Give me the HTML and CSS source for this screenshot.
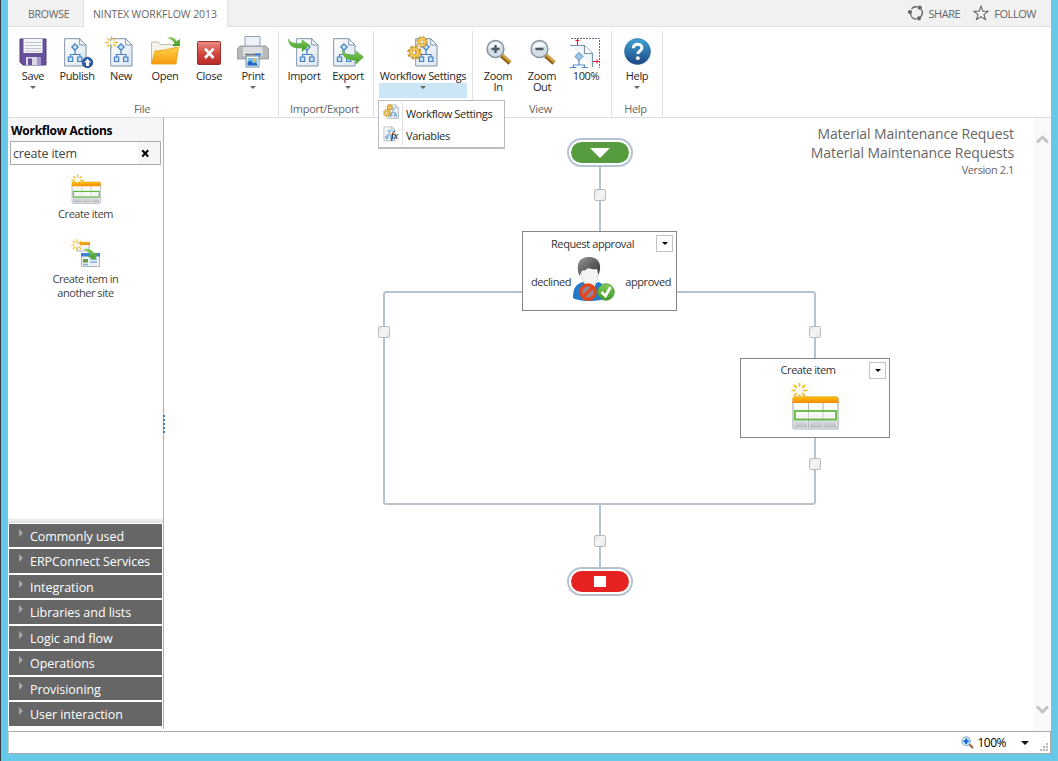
FILE: index.html
```html
<!DOCTYPE html>
<html lang="en">
<head>
<meta charset="utf-8">
<title>Nintex Workflow 2013</title>
<link rel="stylesheet" href="styles.css">
</head>
<body>
<svg class="defs" width="0" height="0" aria-hidden="true">
  <defs>
    <linearGradient id="gGold" x1="0" y1="0" x2="0" y2="1"><stop offset="0" stop-color="#ffd34a"/><stop offset="1" stop-color="#f79a0c"/></linearGradient>
    <linearGradient id="gHead" x1="0" y1="0" x2="0" y2="1"><stop offset="0" stop-color="#ffc000"/><stop offset="1" stop-color="#f58a10"/></linearGradient>
    <linearGradient id="gDoc" x1="0" y1="0" x2="1" y2="1"><stop offset="0" stop-color="#fff"/><stop offset="1" stop-color="#dbe5f0"/></linearGradient>
    <linearGradient id="gRed" x1="0" y1="0" x2="0" y2="1"><stop offset="0" stop-color="#eb8d86"/><stop offset=".5" stop-color="#d24a41"/><stop offset="1" stop-color="#b92a24"/></linearGradient>
    <linearGradient id="gHelp" x1="0" y1="0" x2="0" y2="1"><stop offset="0" stop-color="#3fa5d6"/><stop offset="1" stop-color="#1f4585"/></linearGradient>
    <linearGradient id="gGreen" x1="0" y1="0" x2="0" y2="1"><stop offset="0" stop-color="#83cc5c"/><stop offset="1" stop-color="#3f9a26"/></linearGradient>
    <linearGradient id="gGrey" x1="0" y1="0" x2="0" y2="1"><stop offset="0" stop-color="#fff"/><stop offset=".6" stop-color="#eceef0"/><stop offset="1" stop-color="#b4bac0"/></linearGradient>
    <linearGradient id="gHair" x1="0" y1="0" x2="1" y2="1"><stop offset="0" stop-color="#999"/><stop offset="1" stop-color="#2c2c2c"/></linearGradient>
    <symbol id="doc" viewBox="0 0 23 29" overflow="visible">
      <path d="M.7.7h15l6.300 6.300v21H.7z" fill="url(#gDoc)" stroke="#8094a8"/>
      <path d="M15.700.7V7H22z" fill="#f5f8fb" stroke="#8094a8"/>
      <path d="M11 12v4.500M6.500 19v-2.500h9.500V19" fill="none" stroke="#4580c0" stroke-width="1.200"/>
      <path d="M11 5.800l3.200 3.200-3.200 3.200L7.800 9zM4.400 19h4.300v4.500H4.400zM13.600 19h4.300v4.500h-4.300z" fill="#c8e2f5" stroke="#4580c0" stroke-width="1.200"/>
    </symbol>
    <symbol id="burst" viewBox="-7 -7 14 14" overflow="visible">
      <g stroke="#f6b91f" stroke-width="1.400"><path d="M0-6.700V-3M0 3v3.700M-6.700 0H-3M3 0h3.700M-4.700-4.700l2.500 2.500M2.200 2.200l2.500 2.500M-4.700 4.700l2.500-2.500M2.200-2.200l2.500-2.500"/></g>
      <circle r="2.100" fill="#fffbe4"/>
    </symbol>
    <symbol id="gear" viewBox="-8 -8 16 16" overflow="visible">
      <circle r="6" fill="none" stroke="#b5852a" stroke-width="3.400" stroke-dasharray="2.700 2.010"/>
      <circle r="5.900" fill="none" stroke="#f3bf45" stroke-width="2.200" stroke-dasharray="2.100 2.610" stroke-dashoffset="-.300"/>
      <circle r="3.900" fill="none" stroke="#b5852a" stroke-width="3.900"/>
      <circle r="3.900" fill="none" stroke="#f6ca57" stroke-width="2.800"/>
    </symbol>
    <symbol id="swoosh" viewBox="0 0 22 15" preserveAspectRatio="none" overflow="visible">
      <path d="M.5.600C2 4.500 6 6.200 14 5.200V1.500l7.500 6L14 14.400v-4C5 11.500.5 8 .5.600z" fill="url(#gGreen)" stroke="#58ab3e" stroke-width=".6"/>
    </symbol>
    <symbol id="lens" viewBox="0 0 32 32" overflow="visible">
      <path d="M19 19.500l8.500 7.500" stroke="#8a611c" stroke-width="4.400"/>
      <path d="M19.500 18.500l8.500 7.500" stroke="#d2a03c" stroke-width="2.400"/>
      <circle cx="13" cy="13" r="8.400" fill="#d3dfe6" stroke="#8a959d" stroke-width="1.500"/>
      <path d="M6 12a7 7 0 0 1 13-2c-4 .5-8 1-13 2z" fill="#f5f9fb"/>
      <path d="M9 13h8" stroke="#4d5861" stroke-width="2.400"/>
    </symbol>
    <symbol id="table" viewBox="0 0 48 34" preserveAspectRatio="none" overflow="visible">
      <rect x="1" y="1" width="46" height="32" rx="2" fill="#fff" stroke="#a5acb3" stroke-width="1.200"/>
      <path d="M2.500 7.500h13.300v24.300H2.500zM17.800 7.500h12.900v24.300H17.800zM32.700 7.500h12.800v24.300H32.700z" fill="url(#gGrey)"/>
      <path d="M16.800 7v25.500M31.700 7v25.500" stroke="#b5bbc1" stroke-width="1.200"/>
      <path d="M.5 7V2.500Q.5.500 2.500.500h43q2 0 2 2V7z" fill="url(#gHead)"/>
      <rect x="3" y="15" width="42" height="8.500" fill="#fff" fill-opacity=".3" stroke="#64b840" stroke-width="1.800"/>
    </symbol>
  </defs>
</svg>

<div class="window">
  <header class="tabs">
    <div class="tab">BROWSE</div>
    <div class="tab tab-active">NINTEX WORKFLOW 2013</div>
    <div class="page-actions">
      <span class="action">
        <svg width="16" height="16" viewBox="0 0 16 16" fill="none" stroke="#666" stroke-width="1.400"><path d="M3.500 3.700A6 6 0 0 1 9.500 2M13.400 4.700a6 6 0 0 1-1.400 7.600M8.500 14a6 6 0 0 1-6-5"/><circle cx="11.800" cy="2.700" r="1.400" fill="#666"/><circle cx="2" cy="7" r="1.400" fill="#666"/><circle cx="11" cy="13.300" r="1.400" fill="#666"/></svg>
        <span>SHARE</span>
      </span>
      <span class="action">
        <svg width="16" height="16" viewBox="0 0 16 16"><path d="M8 1.200l1.900 4.900 5.200.2-4.100 3.300 1.500 5L8 11.700l-4.500 2.900 1.500-5L.9 6.300l5.200-.2z" fill="none" stroke="#666" stroke-width="1.100"/></svg>
        <span>FOLLOW</span>
      </span>
    </div>
  </header>

  <nav class="ribbon">
    <section class="group group-file">
      <div class="buttons">
        <div class="btn"><svg class="ico" viewBox="0 0 32 32"><path d="M3 3h26v26H6l-3-3z" fill="#69509b" stroke="#543c84"/><path d="M6.500 3h19v14h-19z" fill="#f5f6f9"/><path d="M8 6.500h16M8 9.500h16M8 12.500h16M8 15.200h16" stroke="#c0c4cd"/><path d="M9 21h15v8H9z" fill="#d9d9e6"/><path d="M11 22.500h4V29h-4z" fill="#69509b"/><path d="M20 21h4v8h-4z" fill="#a596c8"/></svg><span>Save</span><i class="caret"></i></div>
        <div class="btn"><svg class="ico" viewBox="0 0 32 32"><use href="#doc" x="3" y="2" width="23" height="29"/><circle cx="26.500" cy="26.500" r="5.300" fill="#2a5ca6" stroke="#1d4380" stroke-width=".7"/><path d="M26.500 22.800l3.600 3.700h-2v3.500H25v-3.500h-2z" fill="#fff"/></svg><span>Publish</span></div>
        <div class="btn"><svg class="ico" viewBox="0 0 32 32"><use href="#doc" x="5" y="2" width="23" height="29"/><use href="#burst" x="0" y="0" width="13" height="13"/></svg><span>New</span></div>
        <div class="btn"><svg class="ico" viewBox="0 0 32 32"><path d="M2.500 27V6h7l2 2.500H26V27z" fill="#f5f3e9" stroke="#c3bfa8"/><path d="M2.500 28L6 15l10-1 13.500-3-2.500 17z" fill="url(#gGold)" stroke="#e79c18" stroke-width=".8"/><path d="M18 1.500c5-1 8 0 9.500 3.500L31 3v7h-8l2.500-2.500C24 4.500 22 3 18 1.500z" fill="url(#gGreen)"/></svg><span>Open</span></div>
        <div class="btn"><svg class="ico" viewBox="0 0 32 32"><rect x="4.500" y="5.500" width="23" height="23" rx="1" fill="url(#gRed)" stroke="#98312d"/><path d="M12 12.700l8.500 9.300M20.500 12.700L12 22" stroke="#fff" stroke-width="2.700"/></svg><span>Close</span></div>
        <div class="btn"><svg class="ico" viewBox="0 0 32 32"><path d="M8 .5h15V11H8z" fill="#edf3f9" stroke="#8fa3b8"/><path d="M3 10h26l2.500 3v10H.5V13z" fill="#b8babc" stroke="#8b8e92" stroke-width=".8"/><path d="M6 11h19.500v9H6z" fill="#dddfe0"/><path d="M8 18.500h15.500" stroke="#6e7276" stroke-width="1.500"/><path d="M18 18.500h6" stroke="#2a80d9" stroke-width="2"/><path d="M9 20h13v11H9z" fill="#fff" stroke="#6f87a5"/><path d="M10.500 22h10v7.500h-10z" fill="#73c3f1"/><circle cx="18" cy="24" r="1.500" fill="#ffbf2e"/><path d="M10.500 29.500v-3l3-2 3 3 2-1 2 2v1z" fill="#2263ba"/></svg><span>Print</span><i class="caret"></i></div>
      </div>
      <div class="group-name">File</div>
    </section>
    <section class="group group-io">
      <div class="buttons">
        <div class="btn"><svg class="ico" viewBox="0 0 32 32"><use href="#doc" x="8" y="2" width="23" height="29"/><use href="#swoosh" x="0" y="2.500" width="22" height="13.500"/></svg><span>Import</span></div>
        <div class="btn"><svg class="ico" viewBox="0 0 32 32"><use href="#doc" x="1" y="2" width="23" height="29"/><use href="#swoosh" x="10" y="13.500" width="22" height="15"/></svg><span>Export</span><i class="caret"></i></div>
      </div>
      <div class="group-name">Import/Export</div>
    </section>
    <section class="group group-settings">
      <div class="btn btn-wide"><svg class="ico" viewBox="0 0 32 32"><use href="#doc" x="8" y="2" width="23" height="29"/><use href="#gear" x="9" y="0" width="12" height="12"/><use href="#gear" x="0" y="9" width="15" height="15"/></svg><span>Workflow Settings</span><i class="caret"></i></div>
      <div class="menu">
        <div class="menu-item"><span class="menu-icon"><svg width="16" height="16" viewBox="0 0 32 32"><use href="#doc" x="9" y="1" width="23" height="29"/><use href="#gear" x="7" y="0" width="13" height="13"/><use href="#gear" x="0" y="10" width="16" height="16"/></svg></span><span>Workflow Settings</span></div>
        <div class="menu-item"><span class="menu-icon"><svg width="16" height="16" viewBox="0 0 32 32" overflow="visible"><use href="#doc" x="1" y="1" width="24" height="30"/><text class="fx" x="16" y="26">fx</text></svg></span><span>Variables</span></div>
      </div>
    </section>
    <section class="group group-view">
      <div class="buttons">
        <div class="btn"><svg class="ico" viewBox="0 0 32 32"><use href="#lens" x=".5" width="32" height="32"/><path d="M13.500 9v8" stroke="#4d5861" stroke-width="2.400"/></svg><span>Zoom<br>In</span></div>
        <div class="btn"><svg class="ico" viewBox="0 0 32 32"><use href="#lens" x=".5" width="32" height="32"/></svg><span>Zoom<br>Out</span></div>
        <div class="btn"><svg class="ico" viewBox="0 0 32 32"><path d="M1 2.500h28.500V32" fill="none" stroke="#5f7285" stroke-dasharray="2 1"/><path d="M0 9.500h14.500l8 8V31" fill="#f0f5fa" stroke="#8094a8" stroke-width="1.200"/><path d="M14.500 9.500v8h8" fill="#fff" stroke="#8094a8" stroke-width="1.200"/><path d="M9 24v5M3.500 31v-2h11v2M0 31.500h6.500M11.500 31.500h6.500" fill="none" stroke="#4d8bcd" stroke-width="1.200"/><path d="M9 16.500l4 4-4 4-4-4z" fill="#9fc6e2" stroke="#4d8bcd"/><path d="M7.500 3v6M5.500 4.500h4M23 25.500h6M27 23.500v4" stroke="#e5202a" stroke-width="1.100"/></svg><span>100%</span></div>
      </div>
      <div class="group-name">View</div>
    </section>
    <section class="group group-help">
      <div class="buttons">
        <div class="btn"><svg class="ico" viewBox="0 0 32 32"><circle cx="16.500" cy="15.500" r="13" fill="url(#gHelp)" stroke="#286a9f" stroke-width=".6"/><path d="M12.300 12.300c0-5.500 8.800-5.300 8.600-.3-.2 3-4 3-4 6" fill="none" stroke="#fff" stroke-width="3"/><circle cx="16.800" cy="22.200" r="1.900" fill="#fff"/></svg><span>Help</span><i class="caret"></i></div>
      </div>
      <div class="group-name">Help</div>
    </section>
  </nav>

  <main class="workspace">
    <aside class="sidebar">
      <h2>Workflow Actions</h2>
      <div class="search"><span>create item</span><svg width="9" height="9" viewBox="0 0 9 9"><path d="M1.200 1.200l6 6.400M7.200 1.200l-6 6.400" stroke="#000" stroke-width="2.100"/></svg></div>
      <div class="results">
        <div class="result">
          <svg width="32" height="32" viewBox="0 0 32 32"><use href="#table" x="1.500" y="7.500" width="29.500" height="22.500"/><use href="#burst" x="1" y="0" width="13" height="13"/></svg>
          <span>Create item</span>
        </div>
        <div class="result">
          <svg width="32" height="32" viewBox="0 0 32 32"><path d="M7 4h12v8H7z" fill="#f4f5f6" stroke="#aeb6bd"/><path d="M10 3h10v3H10z" fill="#f59b1c"/><path d="M11.500 14.500h18v13h-18z" fill="#eef1f4" stroke="#aab4bd"/><path d="M11 14h19v3.500H11z" fill="#3f83d2"/><path d="M20 20h7M20 23h7M13 25.500h5" stroke="#87aedc" stroke-width="1.600"/><path d="M13 20h5v3.500h-5z" fill="#6b9d46"/><path d="M13 10c6-1 10 1 11.500 5l3-1L25 21l-7.500-3.500 3-1.200C19 13 17 11.500 13 10z" fill="url(#gGreen)"/><use href="#burst" x="1" y="0" width="12" height="12"/></svg>
          <span>Create item in<br>another site</span>
        </div>
      </div>
      <div class="divider"></div>
      <ul class="categories">
        <li>Commonly used</li>
        <li>ERPConnect Services</li>
        <li>Integration</li>
        <li>Libraries and lists</li>
        <li>Logic and flow</li>
        <li>Operations</li>
        <li>Provisioning</li>
        <li>User interaction</li>
      </ul>
      <div class="grip"><i></i><i></i><i></i><i></i><i></i></div>
    </aside>

    <div class="canvas">
      <div class="summary">
        <div>Material Maintenance Request</div>
        <div>Material Maintenance Requests</div>
        <small>Version 2.1</small>
      </div>
      <svg class="links" width="870" height="612" viewBox="164 118 870 612"><path d="M600 165v67M523 292H385.500l-1.500 1.500V502.500l1.500 1.500H813.500l1.500-1.500V437M677 292H813.500l1.500 1.500V359M600 504v66" fill="none" stroke="#b5c3d1" stroke-width="2"/></svg>
      <div class="pill start"><svg width="20" height="10" viewBox="0 0 20 10"><path d="M0 0h20L10 10z" fill="#fff"/></svg></div>
      <div class="pill end"><b></b></div>
      <i class="joint j1"></i><i class="joint j2"></i><i class="joint j3"></i><i class="joint j4"></i><i class="joint j5"></i>
      <div class="node approval">
        <div class="node-head"><span>Request approval</span><b class="drop"></b></div>
        <div class="node-body"><span class="declined">declined</span>
          <svg width="44" height="46" viewBox="0 0 44 46"><path d="M1 42c0-10 3-14 10-16l8 5 7-5c6 2 9 6 9 16-8 4-28 4-34 0z" fill="#2379c8"/><path d="M12 25l7 15 6-15z" fill="#edf3f8"/><path d="M9.500 13c-1 8 2 16 8 17.500 6 0 9.500-8 8.500-17l-8-4z" fill="#f4f4f4" stroke="#cfcfcf" stroke-width=".7"/><path d="M7.500 20C3 7 8 1 17 1s14 7 9.500 18L25 13c-5 1-9-1-9-1s-2 3-6 2.500z" fill="url(#gHair)"/><circle cx="16" cy="36" r="7.200" fill="#8f8496" stroke="#e94315" stroke-width="3"/><path d="M11 41l10-10" stroke="#e94315" stroke-width="3"/><circle cx="34" cy="36" r="8.300" fill="url(#gGreen)" stroke="#48973a" stroke-width=".8"/><path d="M29.500 36l4 4 5-9" fill="none" stroke="#fff" stroke-width="2.700"/></svg>
        <span>approved</span></div>
      </div>
      <div class="node create">
        <div class="node-head"><span>Create item</span><b class="drop"></b></div>
        <svg class="create-art" width="50" height="50" viewBox="0 0 50 50"><use href="#table" x="2" y="13" width="47" height="34"/><use href="#burst" x="1" y="-1" width="17" height="17"/></svg>
      </div>
      <div class="scrollbar">
        <svg width="13" height="10" viewBox="0 0 13 10"><path d="M1 8.500L6.500 3 12 8.500" fill="none" stroke="#c2c2c2" stroke-width="2.800"/></svg>
        <svg width="13" height="10" viewBox="0 0 13 10"><path d="M1 1.500L6.500 7 12 1.500" fill="none" stroke="#c2c2c2" stroke-width="2.800"/></svg>
      </div>
    </div>
  </main>

  <footer class="status">
    <svg width="13" height="13" viewBox="0 0 13 13"><path d="M8 8l4 4" stroke="#a6623b" stroke-width="2.200"/><circle cx="5.200" cy="5.200" r="4.300" fill="#d5ecfb" stroke="#83a4c3"/><path d="M2.500 5.200h5.400M5.200 2.500v5.400" stroke="#1267d4" stroke-width="2"/></svg>
    <span>100%</span>
    <i class="zoom-caret"></i>
    <svg class="resize" width="10" height="10" viewBox="0 0 10 10" fill="#b8b8b8"><path d="M6 0h2v2H6zM3 3h2v2H3zM6 3h2v2H6zM0 6h2v2H0zM3 6h2v2H3zM6 6h2v2H6z"/></svg>
  </footer>
</div>
</body>
</html>
```
FILE: styles.css
```css
* { box-sizing: border-box; }
body {
  margin: 0;
  height: 761px;
  overflow: hidden;
  padding: 0 7px 7px 7px;
  border-left: 1px solid #343a46;
  background: #67c9e8;
  font-family: "Open Sans", "Noto Sans", sans-serif;
  font-size: 11px;
  letter-spacing: -.35px;
  color: #333;
}
.defs { position: absolute; }
.window { width: 1043px; height: 754px; background: #fff; display: flex; flex-direction: column; }

.tabs { height: 27px; display: flex; background: #f1f1f1; border-bottom: 1px solid #e1e1e1; color: #666; }
.tab { width: 75px; padding-left: 20px; line-height: 28px; font-size: 10.500px; letter-spacing: -.25px; white-space: nowrap; }
.tab-active { width: 145px; height: 27px; padding-left: 9px; background: #fff; border: solid #e1e1e1; border-width: 0 1px; letter-spacing: -.08px; }
.page-actions { margin-left: auto; display: flex; gap: 13px; padding-right: 15px; }
.action { display: flex; align-items: center; gap: 5px; height: 26px; letter-spacing: -.45px; }

.ribbon { height: 91px; display: flex; border-bottom: 1px solid #dcdcdc; }
.group { height: 86px; margin-top: 4px; padding: 0 3px; display: flex; flex-direction: column; border-right: 1px solid #e1e1e1; }
.group-file { width: 271px; padding-right: 5px; }
.group-io { width: 95px; padding-right: 6px; }
.group-settings { width: 99px; padding: 0 5px; position: relative; }
.group-view { width: 139px; padding-right: 6px; }
.group-help { width: 51px; padding-right: 6px; }
.buttons { display: flex; height: 72px; }
.btn { flex: none; width: 44px; padding-top: 5px; display: flex; flex-direction: column; align-items: center; line-height: 11px; text-align: center; color: #262626; white-space: nowrap; }
.btn span { margin-top: 2px; }
.ico { width: 32px; height: 32px; overflow: visible; }
.caret { margin-top: 5px; border: 3px solid transparent; border-top-color: #666; border-bottom: 0; }
.btn-wide { width: 88px; height: 67px; background: linear-gradient(#fff 52px, #cde6f7 52px); }
.group-name { text-align: center; line-height: 14px; margin-top: -1px; color: #666; letter-spacing: -.3px; }
.group-settings .menu { position: absolute; left: 4px; top: 69px; z-index: 2; width: 127px; height: 49px; padding: 1px 0; background: #fff; border: 1px solid #babcc4; border-bottom-width: 2px; color: #262626; white-space: nowrap; }
.menu-item { height: 22px; display: flex; align-items: center; }
.menu-icon { width: 24px; height: 22px; padding: 2px 4px; border-right: 1px solid #e1e1e1; margin-right: 3px; }
.fx { font: italic 20px "Liberation Serif", serif; letter-spacing: 0; }

.workspace { height: 613px; display: flex; }
.sidebar { position: relative; width: 156px; height: 611px; border-right: 1px solid #b0b0b0; display: flex; flex-direction: column; }
.sidebar h2 { margin: 0; height: 23px; padding-left: 3px; background: #f5f6f8; color: #000; font-size: 12px; line-height: 26px; letter-spacing: -.28px; }
.search { height: 24px; width: 151px; margin-left: 2px; border: 1px solid #ababab; display: flex; align-items: center; justify-content: space-between; padding: 0 10px 0 2px; font-size: 12.500px; color: #444; background: linear-gradient(90deg, #fff 127px, #f5f6f8 127px); letter-spacing: -.2px; }
.results { flex: 1; padding-top: 9px; }
.result { display: flex; flex-direction: column; align-items: center; text-align: center; line-height: 14px; height: 65px; color: #444; letter-spacing: -.45px; }
.result svg { margin-bottom: 1px; }
.divider { height: 5px; background: linear-gradient(#f5f5f5, #dedede); }
.categories { list-style: none; margin: 0; padding: 1px 1px 3.300px; display: flex; flex-direction: column; gap: 2px; }
.categories li { height: 23.500px; padding-left: 21px; background: #666; color: #fff; font-size: 12.500px; line-height: 25px; letter-spacing: -.05px; position: relative; }
.categories li::before { content: ""; position: absolute; left: 10px; top: 5px; border: 4px solid transparent; border-left-color: #a6a6a6; border-right: 0; }
.grip { position: absolute; right: -2px; top: 297px; display: flex; flex-direction: column; gap: 2px; }
.grip i { width: 2px; height: 2px; background: #3a78bd; }

.canvas { position: relative; flex: 1; display: flex; justify-content: flex-end; }
.summary { text-align: right; padding: 6px 20px 0 0; font-size: 14px; line-height: 19px; color: #666; letter-spacing: -.09px; }
.summary small { display: block; font-size: 11px; line-height: 15px; letter-spacing: -.42px; }
.scrollbar { width: 17px; background: #f9f9f9; display: flex; flex-direction: column; justify-content: space-between; align-items: center; padding: 16px 0 16px; }
.links { position: absolute; left: 0; top: 0; }
.pill { position: absolute; left: 403px; width: 66px; height: 29px; border: 2px solid #b5c3d1; border-radius: 15px; display: flex; align-items: center; justify-content: center; background: #fff; }
.pill::before { content: ""; position: absolute; inset: 2px; border-radius: 11px; }
.start { top: 20px; }
.start::before { background: #569b3e; }
.end { top: 449px; }
.end::before { background: #e52321; }
.pill svg, .pill b { position: relative; }
.pill b { width: 12px; height: 11px; background: #fff; }
.joint { position: absolute; width: 12px; height: 12px; border: 1px solid #bdbdbd; border-radius: 2px; background: linear-gradient(135deg, #e5e5e5, #f6f6f6 50%, #e5e5e5); }
.j1 { left: 430px; top: 71px; }
.j2 { left: 214px; top: 208px; }
.j3 { left: 645px; top: 208px; }
.j4 { left: 645px; top: 340px; }
.j5 { left: 430px; top: 417px; }
.node { position: absolute; height: 80px; border: 1px solid #858589; background: #fff; color: #333; }
.node-head { display: flex; height: 24px; line-height: 24px; text-align: center; }
.node-head span { flex: 1; padding-left: 6px; }
.drop { width: 17px; height: 17px; margin: 3px 3px 0 0; border: 1px solid #c3c3c3; display: flex; align-items: center; justify-content: center; }
.drop::before { content: ""; border: 3px solid transparent; border-top-color: #000; border-bottom: 0; }
.approval { left: 358px; top: 113px; width: 155px; letter-spacing: -.42px; }
.node-body { display: flex; align-items: center; height: 48px; padding: 2px 5px 0 8px; }
.node-body svg { flex: none; margin: 0 auto 4px 1px; }
.create { left: 576px; top: 240px; width: 150px; }
.create .node-head { line-height: 22px; letter-spacing: -.45px; }
.create-art { display: block; margin: 0 auto; }

.status { height: 23px; border: 1px solid #aaa; border-left-color: #ccc; display: flex; align-items: center; justify-content: flex-end; color: #000; font-size: 12px; letter-spacing: -.5px; }
.status span { margin: 0 15px 0 3px; }
.zoom-caret { border: 4px solid transparent; border-top-color: #111; border-bottom: 0; margin-right: 11px; }
.resize { align-self: flex-end; }
```
